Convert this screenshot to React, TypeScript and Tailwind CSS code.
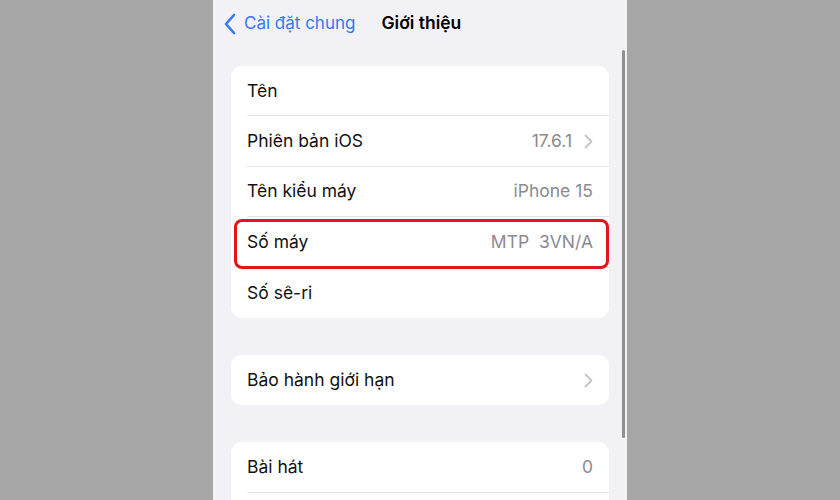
import React from "react";

const Chevron = () => (
  <svg width="9" height="15" viewBox="0 0 9 15" className="ml-[12px]">
    <path d="M1.5 1.5 L7.5 7.5 L1.5 13.5" fill="none" stroke="#c4c4c7" strokeWidth="1.8" strokeLinecap="round" strokeLinejoin="round" />
  </svg>
);

type RowProps = { label: string; value?: string; chevron?: boolean; last?: boolean; highlight?: boolean };

const Row = ({ label, value, chevron, last, highlight }: RowProps) => (
  <div className="relative h-[50.4px] pl-[16px]">
    <div className={`flex h-full items-center pr-[16px] ${last ? "" : "border-b border-[#e3e3e6]"}`}>
      <span className="flex-1 text-[17.5px] text-[#111]">{label}</span>
      {value && <span className="text-[17.5px] text-[#8b8b8f] whitespace-pre">{value}</span>}
      {chevron && <Chevron />}
    </div>
    {highlight && (
      <div className="absolute left-[3px] right-0 top-[2px] bottom-[-1px] border-[3px] border-[#e3141c] rounded-[8px]" />
    )}
  </div>
);

export default function App() {
  return (
    <div className="flex h-[500px] w-[840px] justify-center bg-[#a6a6a6]" style={{ fontFamily: "Inter, 'Noto Sans', sans-serif" }}>
      <div className="relative h-full w-[414px] overflow-hidden bg-[#f1f1f6]">
        <div className="flex h-[47px] items-center pl-[10px]">
          <svg width="14" height="22" viewBox="0 0 14 22" className="mr-[7px]">
            <path d="M11 2 L3 11 L11 20" fill="none" stroke="#3478f6" strokeWidth="2.6" strokeLinecap="round" strokeLinejoin="round" />
          </svg>
          <span className="text-[17px] text-[#3478f6]">Cài đặt chung</span>
          <span className="ml-[26px] text-[17.5px] font-semibold text-black">Giới thiệu</span>
        </div>
        <div className="mx-[18px] mt-[19px] flex flex-col gap-[37px]">
          <div className="rounded-[11px] bg-white">
            <Row label="Tên" />
            <Row label="Phiên bản iOS" value="17.6.1" chevron />
            <Row label="Tên kiểu máy" value="iPhone 15" />
            <Row label="Số máy" value="MTP  3VN/A" highlight />
            <Row label="Số sê-ri" last />
          </div>
          <div className="rounded-[11px] bg-white">
            <Row label="Bảo hành giới hạn" chevron last />
          </div>
          <div className="rounded-[11px] bg-white">
            <Row label="Bài hát" value="0" />
            <Row label="" />
          </div>
        </div>
        <div className="absolute right-[2px] top-[50px] h-[388px] w-[3px] rounded-full bg-[#8e8e93]" />
      </div>
    </div>
  );
}
